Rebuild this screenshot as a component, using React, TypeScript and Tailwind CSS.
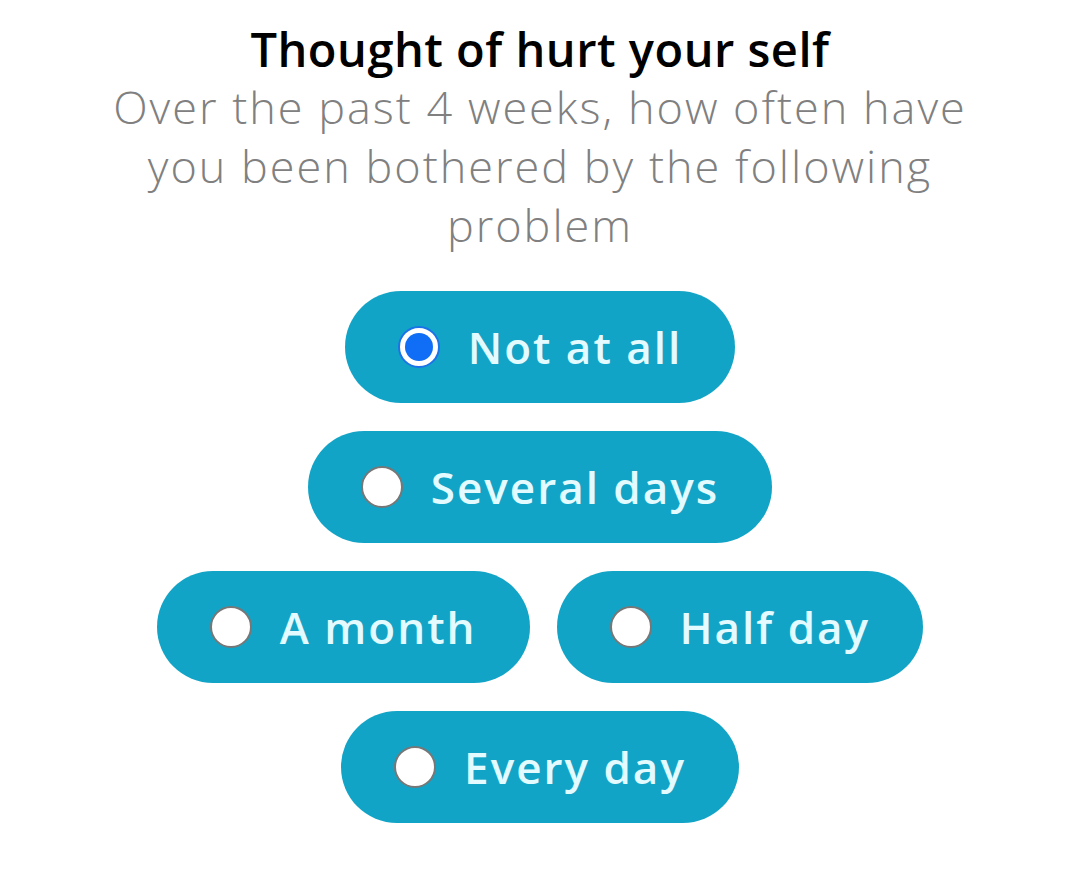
import React, { useState } from "react"

const options = [["Not at all"], ["Several days"], ["A month", "Half day"], ["Every day"]]

const Option = ({ label, checked, onPick }: { label: string; checked: boolean; onPick: () => void }) => (
  <button
    className="flex items-center h-[112px] px-[53px] gap-[28px] rounded-full bg-[#12a4c6] focus:outline-none"
    onClick={onPick}
  >
    {checked ? (
      <span className="w-[42px] h-[42px] rounded-full bg-white border-[2px] border-[#1a73e8] flex items-center justify-center">
        <span className="w-[28px] h-[28px] rounded-full bg-[#0f6ef5]" />
      </span>
    ) : (
      <span className="w-[42px] h-[42px] rounded-full bg-white border-[2px] border-[#777777]" />
    )}
    <span className="text-[44px] font-semibold tracking-[2px] text-[#e3fbff] leading-none">{label}</span>
  </button>
)

const App = () => {
  const [picked, setPicked] = useState("Not at all")

  return (
    <div className="w-[1080px] h-[875px] bg-white flex flex-col items-center pt-[21px]" style={{ fontFamily: "'Open Sans', 'Noto Sans', sans-serif" }}>
      <h1 className="text-[47px] font-semibold tracking-[0.5px] text-black leading-[56px]">Thought of hurt your self</h1>
      <p className="text-[45px] font-light tracking-[2px] text-[#808080] text-center leading-[59px]">
        Over the past 4 weeks, how often have
        <br />
        you been bothered by the following
        <br />
        problem
      </p>
      <div className="flex flex-col items-center gap-[28px] mt-[37px]">
        {options.map((row, i) => (
          <div key={i} className="flex gap-[27px]">
            {row.map((label) => (
              <Option key={label} label={label} checked={picked === label} onPick={() => setPicked(label)} />
            ))}
          </div>
        ))}
      </div>
    </div>
  )
}

export default App
